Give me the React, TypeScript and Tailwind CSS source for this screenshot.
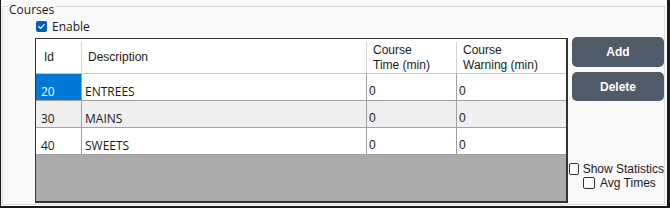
import React from 'react';

type Course = { id: number; description: string; time: number; warning: number };

const courses: Course[] = [
  { id: 20, description: 'ENTREES', time: 0, warning: 0 },
  { id: 30, description: 'MAINS', time: 0, warning: 0 },
  { id: 40, description: 'SWEETS', time: 0, warning: 0 },
];

const segoe = { fontFamily: '"Open Sans", "Noto Sans", sans-serif' };
const arial = { fontFamily: '"Liberation Sans", Arial, sans-serif' };

const CheckBox: React.FC<{ checked?: boolean }> = ({ checked }) =>
  checked ? (
    <span className="flex h-[11px] w-[11px] items-center justify-center rounded-[2px] bg-[#005fb8]">
      <svg viewBox="0 0 10 10" className="h-[9px] w-[9px]">
        <path d="M2 5.2 L4.1 7.2 L8 2.9" fill="none" stroke="white" strokeWidth="1.3" strokeLinecap="round" strokeLinejoin="round" />
      </svg>
    </span>
  ) : (
    <span className="block h-[12px] w-[12px] rounded-[2px] border border-[#333] bg-white" />
  );

export default function App() {
  return (
    <div className="h-[208px] w-[670px] border-b-2 border-l border-r-[3px] border-[#1a1a1a] bg-[#f9f9f9] pb-[1px] pl-[1px] pr-[2px] pt-[6px] text-[#1a1a1a]">
      <div className="relative flex h-[199px] border border-[#dcdcdc]">
        <span className="absolute left-[5px] top-[-4px] bg-[#f9f9f9] px-[1px] text-[12px] leading-[14px]" style={segoe}>
          Courses
        </span>

        {/* left column: enable + grid */}
        <div className="flex flex-col pl-[32px]">
          <label className="ml-[1px] mt-[14px] flex h-[11px] items-center gap-[5px]">
            <CheckBox checked />
            <span className="text-[12px] leading-[11px]" style={segoe}>Enable</span>
          </label>

          <div className="mt-[6px] flex h-[165px] w-[533px] flex-col border-b-2 border-l border-r-2 border-t border-[#333] bg-[#ababab]">
            {/* header */}
            <div className="flex h-[35px] border-b border-[#c4c4c4] bg-white pt-[3px] text-[12px] leading-[15px]" style={arial}>
              <div className="flex w-[46px] items-center border-r border-[#d5d5d5] pl-[8px]">Id</div>
              <div className="flex w-[285px] items-center border-r border-[#d5d5d5] pl-[6px]">Description</div>
              <div className="flex w-[90px] items-center border-r border-[#d5d5d5] pl-[6px]">
                Course<br />Time (min)
              </div>
              <div className="flex flex-1 items-center pl-[6px]">
                Course<br />Warning (min)
              </div>
            </div>

            {/* rows */}
            {courses.map((c, i) => (
              <div
                key={c.id}
                className={`flex h-[27px] border-b border-[#a0a0a0] ${i % 2 === 1 ? 'bg-[#efefef]' : 'bg-white'}`}
              >
                <div
                  className={`flex w-[46px] items-end border-r border-[#a0a0a0] pb-[2px] pl-[5px] text-[12px] leading-[12px] ${i === 0 ? 'bg-[#0078d7] text-white' : ''}`}
                  style={segoe}
                >
                  {c.id}
                </div>
                <div className="flex w-[285px] items-end border-r border-[#a0a0a0] pb-[2px] pl-[3px] text-[12px] leading-[12px]" style={segoe}>
                  {c.description}
                </div>
                <div className="w-[90px] border-r border-[#a0a0a0] pl-[2px] pt-[10px] text-[12px] leading-[14px]" style={arial}>
                  {c.time}
                </div>
                <div className="flex-1 pl-[2px] pt-[10px] text-[12px] leading-[14px]" style={arial}>
                  {c.warning}
                </div>
              </div>
            ))}
          </div>
        </div>

        {/* right column */}
        <div className="flex w-[96px] flex-col pl-[1px]">
          <button className="ml-[3px] mt-[30px] h-[30px] w-[92px] rounded-[5px] bg-[#4f5b66] text-[12px] font-bold text-white" style={arial}>
            Add
          </button>
          <button className="ml-[3px] mt-[5px] h-[29px] w-[92px] rounded-[5px] bg-[#4f5b66] text-[12px] font-bold text-white" style={arial}>
            Delete
          </button>
          <label className="mt-[62px] flex h-[12px] items-center gap-[4px]">
            <CheckBox />
            <span className="whitespace-nowrap text-[12px] leading-[12px]" style={arial}>Show Statistics</span>
          </label>
          <label className="ml-[14px] mt-[2px] flex h-[12px] items-center gap-[5px]">
            <CheckBox />
            <span className="whitespace-nowrap text-[12px] leading-[12px]" style={arial}>Avg Times</span>
          </label>
        </div>
      </div>
    </div>
  );
}
